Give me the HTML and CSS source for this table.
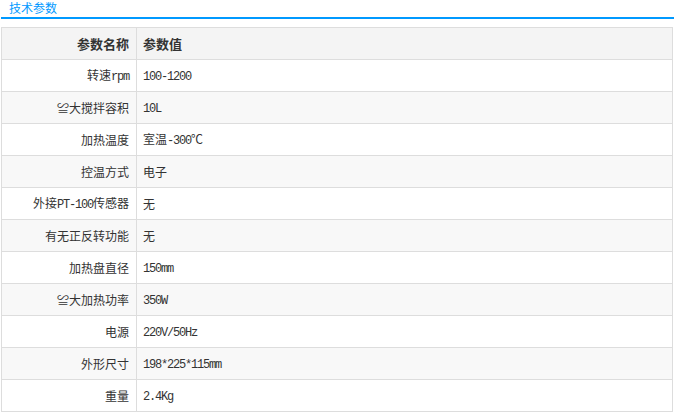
FILE: index.html
```html
<!DOCTYPE html>
<html>
<head>
<meta charset="utf-8">
<link rel="stylesheet" href="styles.css">
</head>
<body>
<div class="page">
  <div class="title"><span>技术参数</span></div>
  <table class="params">
    <tr class="head"><th class="k">参数名称</th><th class="v">参数值</th></tr>
    <tr><td class="k">转速<span class="l">rpm</span></td><td class="v"><span class="l">100-1200</span></td></tr>
    <tr class="alt"><td class="k">≌大搅拌容积</td><td class="v"><span class="l">10L</span></td></tr>
    <tr><td class="k">加热温度</td><td class="v">室温<span class="l">-300</span>℃</td></tr>
    <tr class="alt"><td class="k">控温方式</td><td class="v">电子</td></tr>
    <tr><td class="k">外接<span class="l">PT-100</span>传感器</td><td class="v">无</td></tr>
    <tr class="alt"><td class="k">有无正反转功能</td><td class="v">无</td></tr>
    <tr><td class="k">加热盘直径</td><td class="v"><span class="l">150mm</span></td></tr>
    <tr class="alt"><td class="k">≌大加热功率</td><td class="v"><span class="l">350W</span></td></tr>
    <tr><td class="k">电源</td><td class="v"><span class="l">220V/50Hz</span></td></tr>
    <tr class="alt"><td class="k">外形尺寸</td><td class="v"><span class="l">198*225*115mm</span></td></tr>
    <tr><td class="k">重量</td><td class="v"><span class="l">2.4Kg</span></td></tr>
  </table>
</div>
</body>
</html>
```
FILE: styles.css
```css
html, body {
  margin: 0;
  padding: 0;
  background: #fff;
}
body {
  font-family: "Noto Sans CJK SC", "Liberation Sans", sans-serif;
  font-size: 12px;
  color: #333;
}
.page {
  padding-left: 1px;
  width: 673px;
}
.title {
  height: 17px;
  border-bottom: 2px solid #0099ff;
  padding-left: 8px;
  box-sizing: content-box;
}
.title span {
  color: #0099ff;
  font-size: 12px;
  line-height: 17px;
  display: block;
  position: relative;
  top: -1px;
}
.params {
  margin-top: 8px;
  width: 672px;
  border-collapse: collapse;
  table-layout: fixed;
}
.params th,
.params td {
  border: 1px solid #dddddd;
  height: 32px;
  padding: 0;
  vertical-align: middle;
  line-height: 16px;
  box-sizing: border-box;
}
.params .k {
  width: 135px;
  text-align: right;
  padding-right: 7px;
}
.params .v {
  text-align: left;
  padding-left: 6px;
}
.params tr.head th {
  background: #f4f4f4;
  font-weight: bold;
  font-size: 13px;
  color: #333;
}
.params tr.alt td {
  background: #f8f8f8;
}
.l {
  font-family: "Liberation Mono", monospace;
  font-size: 12px;
  letter-spacing: -1.2px;
}
```
